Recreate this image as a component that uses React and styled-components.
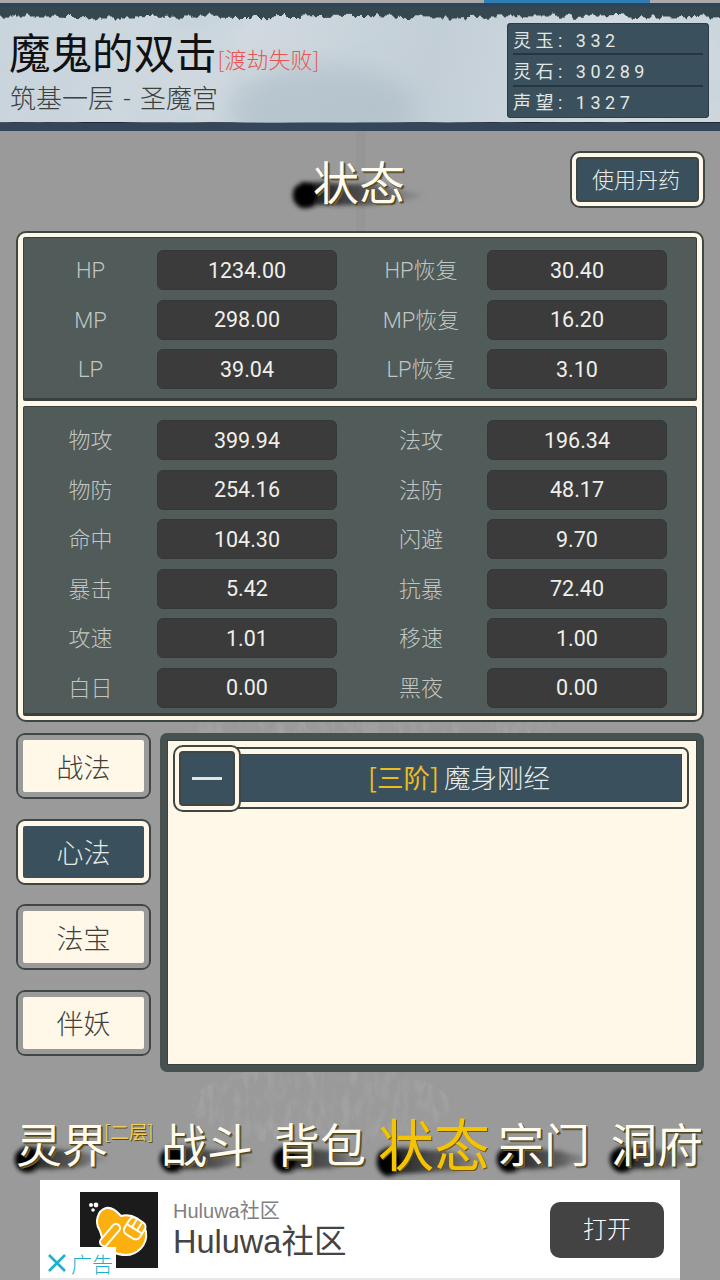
import React from "react";
import styled, { createGlobalStyle } from "styled-components";

const cream = "#fff8e9";
const navy = "#3a505c";
const outline = "#3f4744";

const GlobalStyle = createGlobalStyle`
  html, body {
    margin: 0;
    padding: 0;
    background: #999;
  }
  body {
    font-family: "Roboto", "Noto Sans CJK SC", sans-serif;
  }
`;

const Page = styled.div`
  position: relative;
  width: 720px;
  height: 1280px;
  overflow: hidden;
  background: #9a9a9a;
  display: flex;
  flex-direction: column;
`;

const Backdrop = styled.svg`
  position: absolute;
  left: 0;
  top: 0;
  width: 720px;
  height: 1280px;
`;

const Header = styled.header`
  position: relative;
  height: 131px;
  flex: none;
  box-sizing: border-box;
  padding: 23px 11px 0 9px;
  display: flex;
  justify-content: space-between;
  align-items: flex-start;
  overflow: hidden;
  background: linear-gradient(100deg, #c9d4dc 0%, #d0d9df 35%, #c3ced6 60%, #d4dce2 85%, #ccd6dc 100%);
  border-bottom: 8px solid #35465a;
  box-shadow: inset 0 -1px 0 #1d2a35;
`;

const HeaderArt = styled.svg`
  position: absolute;
  left: 0;
  top: 0;
  width: 720px;
  height: 123px;
`;

const HeaderText = styled.div`
  position: relative;
  display: flex;
  flex-direction: column;
`;

const NameRow = styled.div`
  display: flex;
  align-items: flex-end;
  height: 56px;
`;

const Name = styled.span`
  font-size: 41.5px;
  line-height: 56px;
  color: #111;
  font-family: "Noto Sans CJK SC", sans-serif;
`;

const Tag = styled.span`
  font-size: 22px;
  line-height: 30px;
  margin: 0 0 6px 1px;
  color: #e8544e;
  font-family: "Noto Sans CJK SC", sans-serif;
  font-weight: 300;
`;

const Realm = styled.div`
  margin: 2px 0 0 1px;
  font-size: 26px;
  line-height: 36px;
  word-spacing: 3px;
  color: #3c4140;
  font-weight: 300;
`;

const Wallet = styled.div`
  position: relative;
  width: 202px;
  height: 95px;
  box-sizing: border-box;
  padding: 1px 6px 2px;
  background: ${navy};
  border-radius: 4px;
  box-shadow: inset 0 0 0 1px #2d3c45;
  display: flex;
  flex-direction: column;
`;

const WalletRow = styled.div`
  flex: 1;
  display: flex;
  align-items: center;
  font-size: 18px;
  letter-spacing: 4.5px;
  color: #e3e6e2;
  border-bottom: ${(p) => (p.$last ? "none" : "2px solid #263640")};
`;

const TitleBar = styled.div`
  position: relative;
  height: 100px;
  flex: none;
  display: flex;
  align-items: center;
  justify-content: flex-end;
  padding-right: 16px;
`;

const PageTitle = styled.h1`
  position: absolute;
  left: 313px;
  top: 18px;
  margin: 0;
  font-size: 46px;
  line-height: 62px;
  font-weight: 400;
  color: #fffbee;
  text-shadow: 1px 1px 0 #4d4420, 2px 2px 0 #6b6234;
  font-family: "Noto Sans CJK SC", sans-serif;
`;

const Ink = styled.svg`
  position: absolute;
  overflow: visible;
`;

const TitleInk = styled(Ink)`
  left: 291px;
  top: 46px;
  width: 135px;
  height: 33px;
`;

const OutlinedButton = styled.button`
  box-sizing: border-box;
  padding: 0;
  font-family: "Noto Sans CJK SC", sans-serif;
  background: ${navy};
  color: #e8ebe6;
  border: 5px solid ${cream};
  border-radius: 9px;
  outline: 2px solid ${outline};
  outline-offset: -1px;
  box-shadow: inset 0 0 0 2px ${outline};
`;

const PotionButton = styled(OutlinedButton)`
  position: relative;
  width: 133px;
  height: 55px;
  margin-top: -3px;
  padding: 0 3px 4px 0;
  font-size: 22px;
  font-weight: 300;
`;

const StatsPanel = styled.section`
  flex: none;
  width: 688px;
  height: 491px;
  margin: 0 0 0 16px;
  box-sizing: border-box;
  position: relative;
  background: ${cream};
  border: 2px solid ${outline};
  border-radius: 10px;
  padding: 4px 5px;
  display: flex;
  flex-direction: column;
  gap: 5px;
`;

const StatsGroup = styled.div`
  flex: none;
  background: #505b5a;
  border: 1px solid #3b3f3e;
  border-bottom-width: 3px;
  border-radius: 2px;
  padding: ${(p) => p.$pad}px 30px 0 0;
  height: ${(p) => p.$h}px;
  box-sizing: border-box;
  display: grid;
  grid-template-columns: 313px 312px;
  column-gap: 18px;
  grid-auto-rows: 40px;
  row-gap: 9.5px;
`;

const Stat = styled.div`
  display: flex;
  align-items: center;
`;

const StatLabel = styled.span`
  flex: 1;
  text-align: center;
  font-size: 22px;
  line-height: 41px;
  height: 40px;
  color: #c2c6c2;
  font-weight: 300;
`;

const StatValue = styled.span`
  width: 180px;
  height: 40px;
  box-sizing: border-box;
  background: #3b3b3b;
  border: 1px solid #333838;
  border-radius: 6px;
  color: #efefea;
  font-size: 21.5px;
  display: flex;
  align-items: center;
  justify-content: center;
`;

const Lower = styled.div`
  position: relative;
  flex: none;
  display: flex;
  gap: 9px;
  margin: 11px 16px 0;
  height: 339px;
`;

const TabColumn = styled.div`
  width: 135px;
  display: flex;
  flex-direction: column;
  gap: 19.5px;
`;

const Tab = styled.button`
  height: 66px;
  box-sizing: border-box;
  padding: 0;
  font-size: 27px;
  font-weight: 300;
  font-family: "Noto Sans CJK SC", sans-serif;
  border-radius: 9px;
  border: 2px solid ${outline};
  color: ${(p) => (p.$active ? "#e3ebe8" : "#403f3b")};
  background: ${(p) => (p.$active ? navy : cream)};
  box-shadow: inset 0 0 0 2px ${outline};
  outline: ${(p) => (p.$active ? `5px solid ${cream}` : `5px solid #9a9a9a`)};
  outline-offset: -7px;
`;

const SkillPanel = styled.div`
  position: relative;
  flex: 1;
  box-sizing: border-box;
  background: ${cream};
  border: 7px solid #475150;
  border-radius: 7px;
  padding: 8px 9px 0 7px;
  box-shadow: inset 0 0 0 1px #3a4240;
`;

const SkillRow = styled.div`
  position: relative;
  height: 60px;
  box-sizing: border-box;
  margin-left: 2px;
  padding-left: 60px;
  display: flex;
`;

const SkillBar = styled.div`
  flex: 1;
  background: ${navy};
  border: 6px solid ${cream};
  border-left: none;
  border-radius: 0 6px 6px 0;
  outline: 2px solid ${outline};
  outline-offset: -1px;
  box-shadow: inset 0 0 0 1px ${outline};
  display: flex;
  align-items: center;
  justify-content: center;
  font-size: 26.5px;
  font-weight: 300;
  color: #e6ebe8;
  font-family: "Noto Sans CJK SC", sans-serif;
`;

const SkillName = styled.span`
  margin-top: -4px;
`;

const Rank = styled.span`
  color: #eebb20;
  margin-right: 5px;
  font-weight: 400;
`;

const Collapse = styled(OutlinedButton)`
  position: absolute;
  left: -2px;
  top: -2px;
  width: 66px;
  height: 65px;
  display: flex;
  align-items: center;
  justify-content: center;
`;

const Dash = styled.i`
  display: block;
  width: 30px;
  height: 3px;
  background: #dfe6e4;
`;

const Nav = styled.nav`
  position: absolute;
  left: 16px;
  top: 1108px;
  height: 68px;
  display: flex;
  align-items: center;
`;

const NavItem = styled.div`
  position: relative;
  flex: none;
  margin-left: ${(p) => p.$gap}px;
  display: flex;
  align-items: flex-start;
`;

const NavInk = styled(Ink)`
  left: -3px;
  bottom: ${(p) => (p.$active ? "-2px" : "2px")};
  width: ${(p) => (p.$active ? 116 : 98)}px;
  height: ${(p) => (p.$active ? 36 : 32)}px;
`;

const NavLabel = styled.span`
  position: relative;
  font-size: ${(p) => (p.$active ? 56 : 46)}px;
  line-height: 68px;
  color: ${(p) => (p.$active ? "#f5c400" : "#fffbee")};
  text-shadow: ${(p) =>
    p.$active ? "1px 1px 0 #6a5410" : "1px 1px 0 #4d4420, 2px 2px 0 #6b6234"};
  font-family: "Noto Sans CJK SC", sans-serif;
  font-weight: 400;
`;

const FloorBadge = styled.span`
  position: relative;
  margin: 11px 0 0 -4px;
  width: 50px;
  font-size: 18.5px;
  line-height: 24px;
  white-space: nowrap;
  color: #efcd57;
  text-shadow: 1px 1px 0 #5c4d12;
  font-family: "Noto Sans CJK SC", sans-serif;
`;

const Ad = styled.aside`
  position: absolute;
  left: 40px;
  top: 1180px;
  width: 640px;
  height: 100px;
  box-sizing: border-box;
  background: #fff;
  border-bottom: 2px solid #e8e8e8;
  display: flex;
  align-items: flex-start;
  padding: 12px 16px 0 40px;
  font-family: "Liberation Sans", "Noto Sans CJK SC", sans-serif;
`;

const AdIcon = styled.svg`
  width: 78px;
  height: 76px;
  flex: none;
`;

const AdText = styled.div`
  flex: 1;
  margin-left: 15px;
  display: flex;
  flex-direction: column;
`;

const AdBrand = styled.span`
  font-size: 20px;
  line-height: 24px;
  color: #808080;
  margin-top: 7px;
`;

const AdHeadline = styled.span`
  font-size: 32.5px;
  line-height: 38px;
  color: #444;
`;

const OpenButton = styled.button`
  width: 114px;
  height: 56px;
  margin-top: 10px;
  padding: 0 0 6px;
  border: none;
  border-radius: 10px;
  background: #434343;
  color: #fff;
  font-size: 24px;
  font-family: "Noto Sans CJK SC", sans-serif;
  font-weight: 300;
`;

const AdMark = styled.div`
  position: absolute;
  left: 0;
  bottom: 0;
  width: 76px;
  height: 31px;
  background: #fff;
  color: #18b2cc;
  display: flex;
  align-items: center;
  font-size: 21px;
  font-weight: 300;
  font-family: "Noto Sans CJK SC", sans-serif;
`;

const attrsTop = [
  ["HP", "1234.00", "HP恢复", "30.40"],
  ["MP", "298.00", "MP恢复", "16.20"],
  ["LP", "39.04", "LP恢复", "3.10"],
];

const attrsBottom = [
  ["物攻", "399.94", "法攻", "196.34"],
  ["物防", "254.16", "法防", "48.17"],
  ["命中", "104.30", "闪避", "9.70"],
  ["暴击", "5.42", "抗暴", "72.40"],
  ["攻速", "1.01", "移速", "1.00"],
  ["白日", "0.00", "黑夜", "0.00"],
];

const navItems = [
  { label: "战斗", gap: 7 },
  { label: "背包", gap: 21 },
  { label: "状态", gap: 12, active: true },
  { label: "宗门", gap: 8 },
  { label: "洞府", gap: 21 },
];

const InkDefs = () => (
  <svg width="0" height="0" style={{ position: "absolute" }}>
    <defs>
      <linearGradient id="inkFade" x1="0" x2="1" y1="0" y2="0">
        <stop offset="0" stopColor="#0a0a0a" />
        <stop offset="0.28" stopColor="#262626" stopOpacity="0.88" />
        <stop offset="0.65" stopColor="#444" stopOpacity="0.72" />
        <stop offset="1" stopColor="#666" stopOpacity="0.05" />
      </linearGradient>
      <filter id="brush" x="-20%" y="-40%" width="140%" height="180%">
        <feTurbulence type="fractalNoise" baseFrequency="0.03 0.3" numOctaves="3" seed="4" result="n" />
        <feDisplacementMap in="SourceGraphic" in2="n" scale="5" />
        <feGaussianBlur stdDeviation="2" />
      </filter>
      <filter id="wash" x="-10%" y="-20%" width="120%" height="140%">
        <feTurbulence type="fractalNoise" baseFrequency="0.12 0.05" numOctaves="4" seed="9" />
        <feColorMatrix values="0 0 0 0 0.4  0 0 0 0 0.4  0 0 0 0 0.4  0 0 0 1.6 -0.7" />
        <feComposite in2="SourceGraphic" operator="in" />
        <feGaussianBlur stdDeviation="0.7" />
      </filter>
      <filter id="paper" x="0" y="0" width="100%" height="100%">
        <feTurbulence type="fractalNoise" baseFrequency="0.012 0.02" numOctaves="4" seed="14" />
        <feColorMatrix values="0 0 0 0 0.55  0 0 0 0 0.64  0 0 0 0 0.7  0 0 0 1.5 -0.68" />
      </filter>
      <filter id="torn" x="0" y="-30%" width="100%" height="160%">
        <feTurbulence type="fractalNoise" baseFrequency="0.16 0.02" numOctaves="3" seed="3" />
        <feDisplacementMap in="SourceGraphic" scale="11" xChannelSelector="R" yChannelSelector="R" />
      </filter>
      <filter id="blotch" x="-20%" y="-20%" width="140%" height="140%">
        <feGaussianBlur stdDeviation="12" />
      </filter>
    </defs>
  </svg>
);

// brush stroke behind a heading: dark round head on the left, fading tail
const Smear = ({ as: Wrap = NavInk, active, w = 98, h = 32 }) => (
  <Wrap $active={active} viewBox={`0 0 ${w} ${h}`} aria-hidden="true">
    <g filter="url(#brush)">
      <path
        d={`M4 ${h * 0.45} C6 ${h * 0.1} 24 ${h * 0.12} ${w * 0.5} ${h * 0.22} C${w * 0.75} ${h * 0.3} ${w * 0.9} ${h * 0.42} ${w} ${h * 0.55} C${w * 0.8} ${h * 0.78} ${w * 0.5} ${h * 0.85} 26 ${h * 0.88} C12 ${h} 4 ${h * 0.85} 4 ${h * 0.45}Z`}
        fill="url(#inkFade)"
      />
      <ellipse cx="14" cy={h * 0.55} rx="12" ry={h * 0.4} fill="#060606" />
    </g>
  </Wrap>
);

const Stats = ({ rows, height, pad }) => (
  <StatsGroup $h={height} $pad={pad}>
    {rows.flatMap(([a, av, b, bv]) => [
      <Stat key={a}>
        <StatLabel>{a}</StatLabel>
        <StatValue>{av}</StatValue>
      </Stat>,
      <Stat key={b}>
        <StatLabel>{b}</StatLabel>
        <StatValue>{bv}</StatValue>
      </Stat>,
    ])}
  </StatsGroup>
);

export default function App() {
  return (
    <Page>
      <GlobalStyle />
      <InkDefs />
      <Backdrop viewBox="0 0 720 1280" aria-hidden="true">
        <rect x="356" y="131" width="10" height="100" fill="#8f8f8f" opacity="0.35" />
        <g filter="url(#wash)">
          <rect x="190" y="722" width="370" height="12" fill="#000" />
          <ellipse cx="320" cy="1105" rx="130" ry="40" fill="#000" />
        </g>
      </Backdrop>

      <Header>
        <HeaderArt viewBox="0 0 720 123" aria-hidden="true">
          <rect width="720" height="123" filter="url(#paper)" />
          <ellipse cx="320" cy="110" rx="95" ry="45" fill="#a8b9c4" opacity="0.55" filter="url(#blotch)" />
          <path
            filter="url(#torn)"
            fill="#35464f"
            d="M-10 0H730V16C690 17 660 19 620 16C570 18 520 15 470 17C420 19 370 15 320 16C260 19 210 15 150 17C100 19 50 15 -10 17Z"
          />
          <rect x="0" y="0" width="720" height="3" fill="#a9a9a9" />
          <rect x="484" y="0" width="166" height="3" fill="#2f7fb5" />
          <rect x="0" y="3" width="720" height="4" fill="#2f4458" />
        </HeaderArt>
        <HeaderText>
          <NameRow>
            <Name>魔鬼的双击</Name>
            <Tag>[渡劫失败]</Tag>
          </NameRow>
          <Realm>筑基一层 - 圣魔宫</Realm>
        </HeaderText>
        <Wallet>
          <WalletRow>灵玉: 332</WalletRow>
          <WalletRow>灵石: 30289</WalletRow>
          <WalletRow $last>声望: 1327</WalletRow>
        </Wallet>
      </Header>

      <TitleBar>
        <Smear as={TitleInk} w={135} h={33} />
        <PageTitle>状态</PageTitle>
        <PotionButton>使用丹药</PotionButton>
      </TitleBar>

      <StatsPanel>
        <Stats rows={attrsTop} height={164} pad={12} />
        <Stats rows={attrsBottom} height={310} pad={13} />
      </StatsPanel>

      <Lower>
        <TabColumn>
          <Tab>战法</Tab>
          <Tab $active>心法</Tab>
          <Tab>法宝</Tab>
          <Tab>伴妖</Tab>
        </TabColumn>
        <SkillPanel>
          <SkillRow>
            <SkillBar>
              <SkillName>
                <Rank>[三阶]</Rank>魔身刚经
              </SkillName>
            </SkillBar>
            <Collapse>
              <Dash />
            </Collapse>
          </SkillRow>
        </SkillPanel>
      </Lower>

      <Nav>
        <NavItem $gap={0}>
          <Smear />
          <NavLabel>灵界</NavLabel>
          <FloorBadge>[二层]</FloorBadge>
        </NavItem>
        {navItems.map((item) => (
          <NavItem key={item.label} $gap={item.gap}>
            <Smear active={item.active} w={item.active ? 116 : 98} h={item.active ? 36 : 32} />
            <NavLabel $active={item.active}>{item.label}</NavLabel>
          </NavItem>
        ))}
      </Nav>

      <Ad>
        <AdIcon viewBox="0 0 78 76" aria-hidden="true">
          <rect width="78" height="76" fill="#1b1b1b" />
          <path
            d="M26 16C33 15 37 20 41 24C52 21 64 28 66 40C68 54 56 63 46 63C36 63 27 58 24 52C21 45 22 42 19 37C15 30 17 19 26 16Z"
            fill="#fbb010"
            stroke="#fff"
            strokeWidth="2"
          />
          <g transform="rotate(32 55 36)">
            <rect x="46" y="27" width="18" height="19" rx="5" fill="#fbb010" stroke="#fff" strokeWidth="2" />
            <path d="M52 27V37M58 27V37M46 37H64" stroke="#fff" strokeWidth="2" fill="none" />
          </g>
          <path d="M36 36L24 50" stroke="#fff" strokeWidth="10" strokeLinecap="round" />
          <path d="M36 36L24 50" stroke="#fbb010" strokeWidth="6" strokeLinecap="round" />
          <circle cx="11" cy="13" r="2" fill="#fff" />
          <circle cx="16" cy="13" r="2.4" fill="#fff" />
          <circle cx="13" cy="18" r="1.8" fill="#fff" />
        </AdIcon>
        <AdText>
          <AdBrand>Huluwa社区</AdBrand>
          <AdHeadline>Huluwa社区</AdHeadline>
        </AdText>
        <OpenButton>打开</OpenButton>
        <AdMark>
          <svg width="20" height="20" viewBox="0 0 20 20" style={{ margin: "0 4px 0 7px" }} aria-hidden="true">
            <path d="M2 2L18 18M18 2L2 18" stroke="#18b2cc" strokeWidth="2.6" />
          </svg>
          广告
        </AdMark>
      </Ad>
    </Page>
  );
}
